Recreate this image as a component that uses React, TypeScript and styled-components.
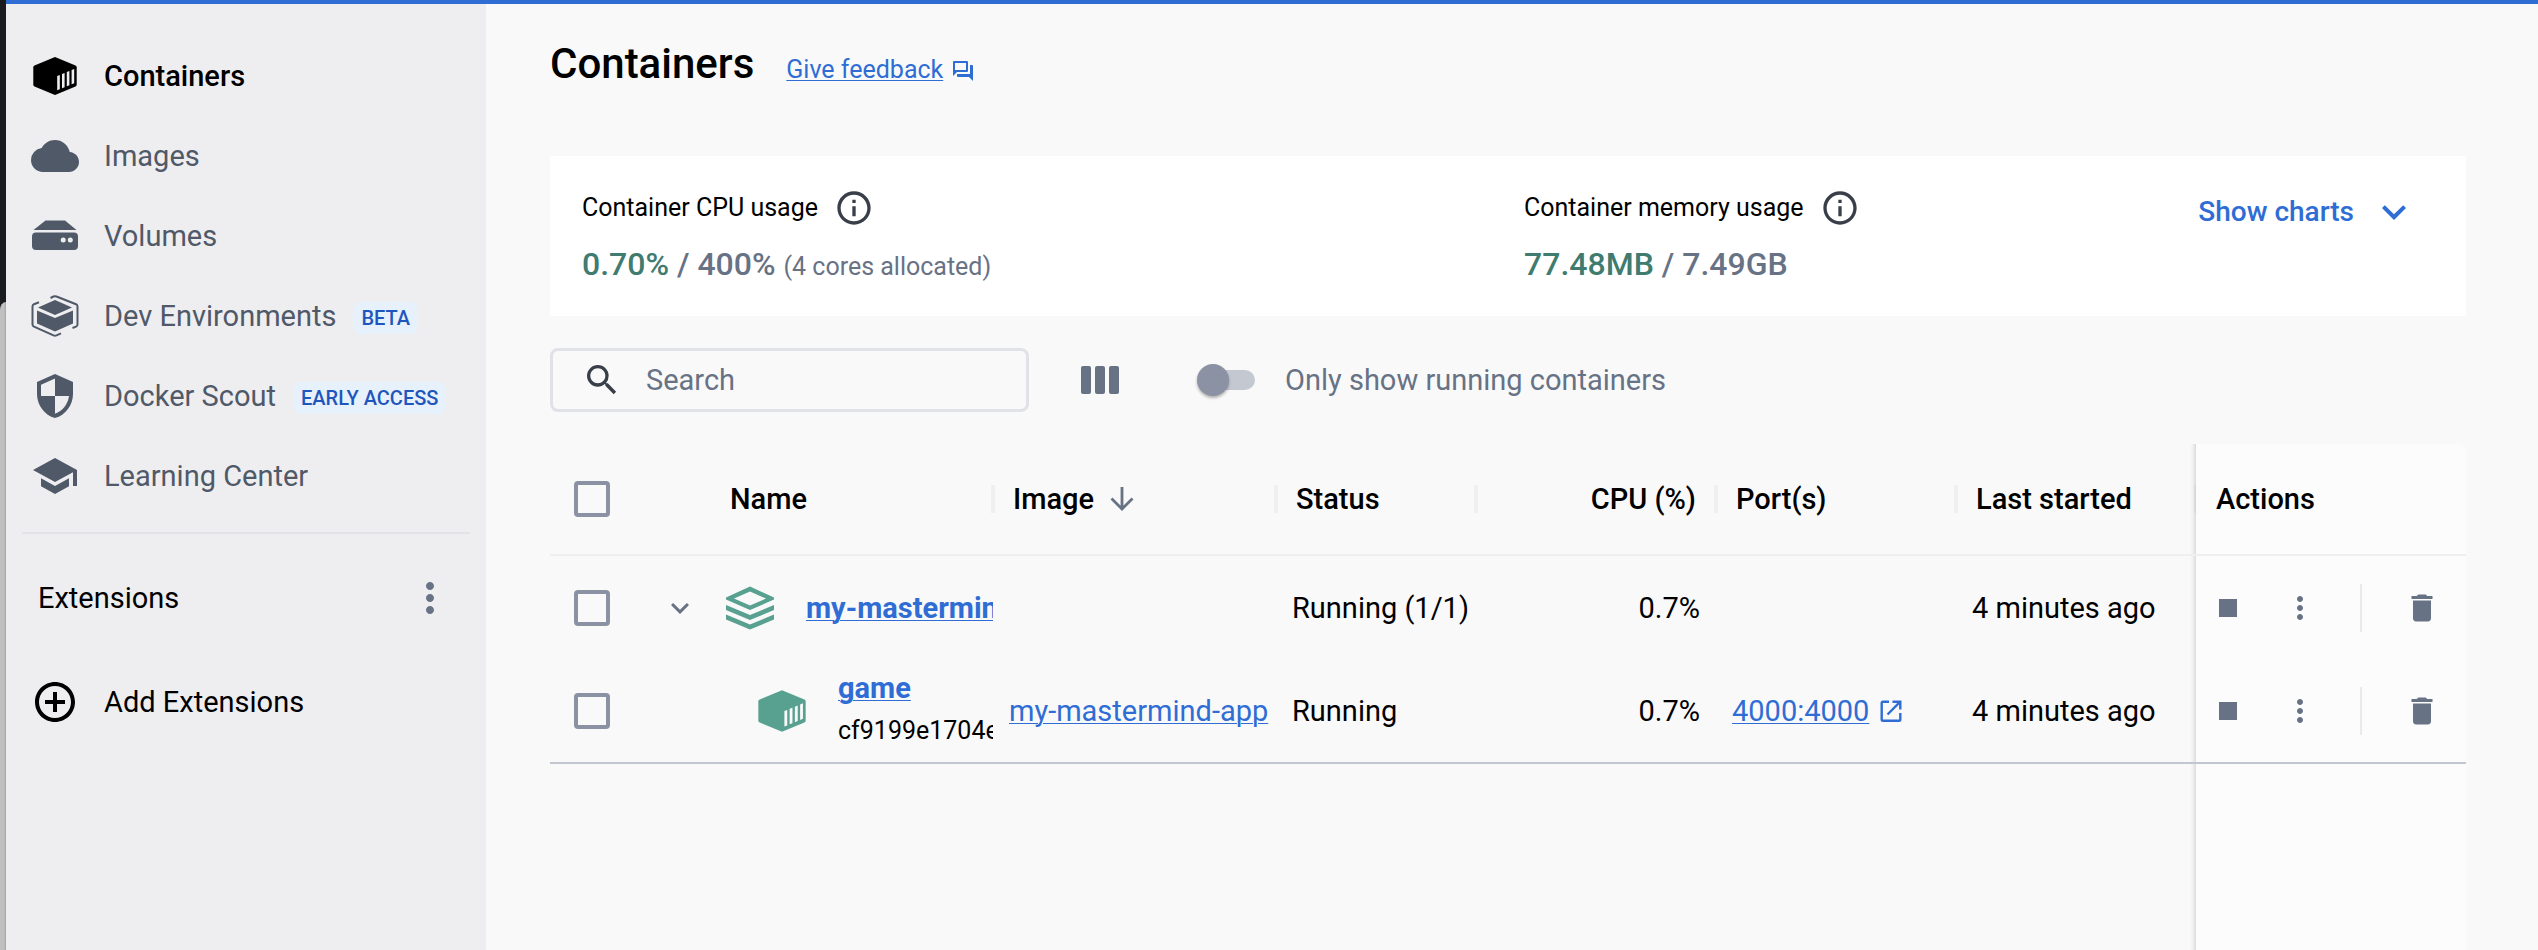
import React from "react";
import styled, { createGlobalStyle } from "styled-components";
import {
  MdAddCircleOutline,
  MdCloud,
  MdDelete,
  MdExpandMore,
  MdInfoOutline,
  MdMoreVert,
  MdSchool,
  MdSearch,
  MdStop,
} from "react-icons/md";

const c = {
  page: "#f9f9fa",
  sidebar: "#eeeef1",
  sticky: "#fcfcfd",
  blue: "#2f6dd5",
  badgeText: "#1f56bd",
  badgeBg: "#e6f1fb",
  text: "#000000",
  nav: "#505968",
  muted: "#677285",
  control: "#8b92a4",
  track: "#c4c8d1",
  dark: "#393f49",
  line: "#eeeff1",
  border: "#e1e2e7",
  rule: "#c1c6cf",
  green: "#3f7b6e",
  iconGreen: "#58a08f",
};

const GlobalStyle = createGlobalStyle`
  *, *::before, *::after { box-sizing: border-box; }
  body {
    margin: 0;
    background: ${c.page};
    color: ${c.text};
    font-family: Roboto, "Liberation Sans", sans-serif;
    font-size: 29px;
    line-height: 40px;
  }
  button {
    font: inherit;
    color: inherit;
    background: none;
    border: 0;
    padding: 0;
    cursor: pointer;
  }
`;

const Shell = styled.div`
  display: flex;
  min-height: 100vh;
`;

const Backdrop = styled.div`
  flex: none;
  width: 6px;
  display: flex;
  flex-direction: column;
  background: #1a1b1e;
`;

const BackdropWindow = styled.div`
  flex: 1;
  margin-top: 302px;
  background: linear-gradient(90deg, #c0c0c0 4px, #a2a2a4 6px);
  border-top-left-radius: 6px 8px;
`;

const AppWindow = styled.div`
  flex: 1;
  min-width: 0;
  display: flex;
  border-top: 4px solid ${c.blue};
`;

const Sidebar = styled.aside`
  flex: none;
  width: 480px;
  padding: 32px 16px;
  background: ${c.sidebar};
`;

const NavList = styled.ul`
  list-style: none;
  margin: 0;
  padding: 0 0 16px;
  border-bottom: 2px solid #e2e3e6;
`;

const NavLink = styled.a<{ $active?: boolean }>`
  display: flex;
  align-items: center;
  height: 80px;
  padding-left: 9px;
  color: ${(p) => (p.$active ? c.text : c.nav)};
  font-weight: ${(p) => (p.$active ? 500 : 400)};
  text-decoration: none;
  white-space: nowrap;

  svg {
    flex: none;
    width: 48px;
    height: 48px;
    margin-right: 25px;
  }
`;

const Badge = styled.span`
  margin: 4px 0 0 17px;
  padding: 0 8px;
  border-radius: 8px;
  background: ${c.badgeBg};
  color: ${c.badgeText};
  font-size: 20px;
  font-weight: 500;
  line-height: 32px;
`;

const ExtensionsHeader = styled.div`
  display: flex;
  align-items: center;
  justify-content: space-between;
  margin-top: 40px;
  padding: 0 16px;
  height: 48px;
`;

const ExtensionsTitle = styled.h2`
  margin: 0;
  font-size: 29px;
  font-weight: 400;
`;

const IconButton = styled.button<{ $size: number }>`
  display: flex;
  width: ${(p) => p.$size}px;
  height: ${(p) => p.$size}px;
  color: ${c.muted};

  svg {
    width: 100%;
    height: 100%;
  }
`;

const AddButton = styled.button`
  display: flex;
  align-items: center;
  width: 100%;
  height: 80px;
  margin-top: 40px;
  padding-left: 9px;

  svg {
    width: 48px;
    height: 48px;
    margin-right: 25px;
  }
`;

const Main = styled.main`
  flex: 1;
  min-width: 0;
  display: flex;
  flex-direction: column;
  padding: 32px 72px 0 64px;
`;

const PageHeader = styled.header`
  display: flex;
  align-items: baseline;
  gap: 32px;
`;

const PageTitle = styled.h1`
  margin: 0;
  font-size: 42px;
  font-weight: 500;
  line-height: 56px;
`;

const TextLink = styled.a<{ $strong?: boolean; $small?: boolean }>`
  color: ${c.blue};
  font-size: ${(p) => (p.$small ? 25 : 29)}px;
  font-weight: ${(p) => (p.$strong ? 700 : 400)};
  text-decoration: underline;
  text-decoration-thickness: 1px;
  text-underline-offset: 2px;
`;

const LinkWithIcon = styled.span`
  display: inline-flex;
  align-items: center;
  gap: 8px;
  color: ${c.blue};
`;

const Summary = styled.section`
  display: grid;
  grid-template-columns: 1fr 1fr;
  margin-top: 64px;
  padding: 32px 0 32px 32px;
  background: #ffffff;
`;

const SummaryCell = styled.div`
  display: flex;
  align-items: flex-start;
  justify-content: space-between;
  padding-right: 48px;
`;

const Label = styled.div`
  display: flex;
  align-items: center;
  gap: 16px;
  height: 40px;
  font-size: 25px;

  svg {
    width: 40px;
    height: 40px;
    color: ${c.dark};
  }
`;

const Value = styled.p`
  margin: 16px 0 0;
  color: ${c.muted};
  font-size: 32px;
  font-weight: 500;
  line-height: 40px;

  strong {
    color: ${c.green};
    font-weight: 500;
  }

  small {
    font-size: 25px;
    font-weight: 400;
    line-height: 1;
  }
`;

const ChartsButton = styled.button`
  display: flex;
  align-items: center;
  gap: 16px;
  height: 48px;
  color: ${c.blue};
  font-size: 28px;
  font-weight: 500;

  svg {
    width: 48px;
    height: 48px;
  }
`;

const Toolbar = styled.div`
  display: flex;
  align-items: center;
  margin-top: 32px;
  height: 64px;
`;

const SearchBox = styled.label`
  display: flex;
  align-items: center;
  gap: 24px;
  width: 479px;
  height: 64px;
  padding: 0 29px;
  border: 3px solid ${c.border};
  border-radius: 8px;

  svg {
    flex: none;
    width: 40px;
    height: 40px;
    color: ${c.dark};
  }
`;

const SearchInput = styled.input`
  flex: 1;
  min-width: 0;
  padding: 0;
  border: 0;
  outline: 0;
  background: transparent;
  font: inherit;

  &::placeholder {
    color: ${c.muted};
    opacity: 1;
  }
`;

const ColumnsButton = styled(IconButton)`
  margin: 0 77px 0 51px;
`;

const SwitchLabel = styled.label`
  display: flex;
  align-items: center;
  gap: 30px;
  color: ${c.muted};
`;

const Switch = styled.input`
  appearance: none;
  display: flex;
  align-items: center;
  width: 58px;
  height: 32px;
  margin: 0;

  &::before {
    content: "";
    z-index: 1;
    width: 32px;
    height: 32px;
    border-radius: 50%;
    background: ${c.control};
    box-shadow: 0 2px 3px rgba(0, 0, 0, 0.3);
  }

  &::after {
    content: "";
    width: 42px;
    height: 20px;
    margin-left: -16px;
    border-radius: 10px;
    background: ${c.track};
  }

  &:checked::before {
    order: 1;
    margin-left: -16px;
  }

  &:checked::after {
    margin-left: 0;
  }
`;

const TableArea = styled.div`
  flex: 1;
  display: flex;
  flex-direction: column;
  margin-top: 32px;
`;

const Table = styled.table`
  width: 100%;
  table-layout: fixed;
  border-collapse: separate;
  border-spacing: 0;
`;

const Column = styled.col<{ $width: number }>`
  width: ${(p) => p.$width}px;
`;

const HeadCell = styled.th`
  height: 112px;
  padding: 0;
  border-bottom: 2px solid ${c.line};
  font-weight: 500;
  text-align: left;
  white-space: nowrap;
`;

const HeadCheckCell = styled(HeadCell)`
  padding: 0 24px;
`;

const HeadLabel = styled.div<{ $right?: boolean; $divided?: boolean }>`
  display: flex;
  align-items: center;
  justify-content: ${(p) => (p.$right ? "flex-end" : "flex-start")};
  gap: 16px;
  height: 28px;
  margin-right: -2px;
  padding: 0 18px 0 20px;
  border-right: ${(p) => (p.$divided ? 4 : 0)}px solid ${c.line};
`;

const Cell = styled.td<{ $right?: boolean; $last?: boolean }>`
  height: 104px;
  padding: 0 16px;
  border-bottom: ${(p) => (p.$last ? 2 : 0)}px solid ${c.rule};
  text-align: ${(p) => (p.$right ? "right" : "left")};
  white-space: nowrap;
`;

const CheckCell = styled(Cell)`
  padding: 0 24px;
`;

const ExpandCell = styled(Cell)`
  padding: 0 28px;
`;

const NameCell = styled(Cell)<{ $nested?: boolean }>`
  padding: 0 0 0 ${(p) => (p.$nested ? 48 : 16)}px;
  overflow: hidden;
`;

const NameContent = styled.div`
  display: flex;
  align-items: center;
  gap: 32px;

  svg {
    flex: none;
    width: 48px;
    height: 48px;
    color: ${c.iconGreen};
  }
`;

const ContainerName = styled.div`
  line-height: 34px;
`;

const ContainerId = styled.div`
  margin-top: 6px;
  font-size: 25px;
`;

const stickyColumn = `
  position: relative;
  background: ${c.sticky};

  &::before {
    content: "";
    position: absolute;
    top: 0;
    bottom: 0;
    right: 100%;
    width: 6px;
    background: linear-gradient(to left, rgba(0, 0, 0, 0.12), rgba(0, 0, 0, 0.04) 50%, transparent);
  }
`;

const ActionsHead = styled(HeadCell)`
  ${stickyColumn}
  border-top-right-radius: 8px;
`;

const ActionsCell = styled(Cell)`
  ${stickyColumn}
  padding: 0 0 0 14px;
`;

const ActionsFiller = styled.div`
  ${stickyColumn}
  flex: 1;
  align-self: flex-end;
  width: 270px;
`;

const ActionList = styled.div`
  display: flex;
  align-items: center;
  gap: 36px;
`;

const ActionDivider = styled.span`
  width: 2px;
  height: 48px;
  margin: 0 6px;
  background: #e9eaed;
`;

const Checkbox = styled.input`
  appearance: none;
  display: block;
  width: 36px;
  height: 36px;
  margin: 0;
  border: 4px solid ${c.control};
  border-radius: 4px;

  &:checked {
    background: ${c.blue};
  }
`;

function ContainerIcon({ stripe, viewBox = "0 0 48 48" }: { stripe: string; viewBox?: string }) {
  return (
    <svg viewBox={viewBox} aria-hidden="true">
      <path
        d="M24 5 44.5 13.5Q45.7 14 45.7 15.3V32.7Q45.7 34 44.5 34.5L24 43 3.5 34.5Q2.3 34 2.3 32.7V15.3Q2.3 14 3.5 13.5Z"
        fill="currentColor"
      />
      <path
        d="M26.2 24 28.8 23V37.2L26.2 38.2ZM31 22 33.6 21V35.2L31 36.2ZM35.8 20 38.4 19V33.2L35.8 34.2ZM40.6 18 43.2 17V31.2L40.6 32.2Z"
        fill={stripe}
      />
    </svg>
  );
}

function VolumesIcon() {
  return (
    <svg viewBox="0 0 48 48" aria-hidden="true">
      <path d="M14.5 8.5H34L45.5 18H2.5Z" fill="currentColor" />
      <path
        fillRule="evenodd"
        d="M5 20.5H43Q47 20.5 47 24.5V34Q47 38 43 38H5Q1 38 1 34V24.5Q1 20.5 5 20.5ZM32.2 25.5A2.5 2.5 0 1 0 32.2 30.5A2.5 2.5 0 1 0 32.2 25.5ZM39.3 25.5A2.5 2.5 0 1 0 39.3 30.5A2.5 2.5 0 1 0 39.3 25.5Z"
        fill="currentColor"
      />
    </svg>
  );
}

function DevEnvironmentsIcon() {
  return (
    <svg viewBox="0 0 48 48" aria-hidden="true">
      <path d="M24 8 41 15.5 24 23 7 15.5Z" fill="currentColor" />
      <path d="M6 18.5 24 26 42 18.5V31.5L24 39.5 6 31.5Z" fill="currentColor" />
      <path
        d="M19.5 6 22.5 4.5Q24 3.8 25.5 4.5L45 12.2Q46.5 13 46.5 14.5V32.5Q46.5 34 45 34.7L41.5 36M30 41.3 25.5 43.3Q24 44 22.5 43.3L3 34.7Q1.5 34 1.5 32.5V14.5Q1.5 13 3 12.2L8 10.2"
        fill="none"
        stroke="currentColor"
        strokeWidth="2"
      />
    </svg>
  );
}

function ScoutIcon() {
  return (
    <svg viewBox="0 0 48 48" aria-hidden="true">
      <path
        fillRule="evenodd"
        d="M24 2 42 10V22C42 33 34.5 43.3 24 46 13.5 43.3 6 33 6 22V10ZM24 6.5V24H38C37 32 31.5 39.3 24 41.7V24H10V12.7Z"
        fill="currentColor"
      />
    </svg>
  );
}

function FeedbackIcon() {
  return (
    <svg width="24" height="24" viewBox="0 0 24 24" aria-hidden="true">
      <path
        fillRule="evenodd"
        d="M3 3H16Q17 3 17 4V13Q17 14 16 14H6L2 18V4Q2 3 3 3ZM4 5V12H15V5ZM19 7H21Q22 7 22 8V23L18 19H7Q6 19 6 18V16H19Z"
        fill="currentColor"
      />
    </svg>
  );
}

function ColumnsIcon() {
  return (
    <svg viewBox="0 0 40 40" aria-hidden="true">
      <g fill="currentColor">
        <rect x="1" y="6" width="10" height="28" rx="2" />
        <rect x="15" y="6" width="10" height="28" rx="2" />
        <rect x="29" y="6" width="10" height="28" rx="2" />
      </g>
    </svg>
  );
}

function SortIcon() {
  return (
    <svg width="24" height="24" viewBox="0 0 24 24" aria-hidden="true">
      <path
        d="M12 0V22M1.5 11.5 12 22 22.5 11.5"
        fill="none"
        stroke={c.muted}
        strokeWidth="2.8"
      />
    </svg>
  );
}

function StackIcon() {
  return (
    <svg viewBox="0 0 48 48" aria-hidden="true">
      <path
        fillRule="evenodd"
        d="M24 2.5 48 13.5V15.5L24 26 0 15.5V13.5ZM24 7.5 8 14.5 24 21.5 40 14.5Z"
        fill="currentColor"
      />
      <path
        d="M0 21 24 31 48 21V26L24 36 0 26ZM0 30.5 24 40.5 48 30.5V35.5L24 45.5 0 35.5Z"
        fill="currentColor"
      />
    </svg>
  );
}

function OpenIcon() {
  return (
    <svg width="28" height="28" viewBox="0 0 28 28" aria-hidden="true">
      <path
        d="M12 4.7H6Q4.7 4.7 4.7 6V22.5Q4.7 23.8 6 23.8H22Q23.3 23.8 23.3 22.5V16M15.5 4.7H23.3V12.5M23.3 4.7 10.5 17.5"
        fill="none"
        stroke="currentColor"
        strokeWidth="2.4"
      />
    </svg>
  );
}

function RowActions({ name }: { name: string }) {
  return (
    <ActionList>
      <IconButton $size={36} aria-label={`Stop ${name}`}>
        <MdStop />
      </IconButton>
      <IconButton $size={36} aria-label={`More actions for ${name}`}>
        <MdMoreVert />
      </IconButton>
      <ActionDivider />
      <IconButton $size={36} aria-label={`Delete ${name}`}>
        <MdDelete />
      </IconButton>
    </ActionList>
  );
}

const navItems: {
  label: string;
  icon: React.ReactNode;
  badge?: string;
  active?: boolean;
}[] = [
  { label: "Containers", icon: <ContainerIcon stripe={c.sidebar} />, active: true },
  { label: "Images", icon: <MdCloud /> },
  { label: "Volumes", icon: <VolumesIcon /> },
  { label: "Dev Environments", icon: <DevEnvironmentsIcon />, badge: "BETA" },
  { label: "Docker Scout", icon: <ScoutIcon />, badge: "EARLY ACCESS" },
  { label: "Learning Center", icon: <MdSchool /> },
];

export default function App() {
  return (
    <>
      <GlobalStyle />
      <Shell>
        <Backdrop>
          <BackdropWindow />
        </Backdrop>
        <AppWindow>
          <Sidebar>
            <nav>
              <NavList>
                {navItems.map((item) => (
                  <li key={item.label}>
                    <NavLink href="#" $active={item.active}>
                      {item.icon}
                      {item.label}
                      {item.badge && <Badge>{item.badge}</Badge>}
                    </NavLink>
                  </li>
                ))}
              </NavList>
            </nav>
            <ExtensionsHeader>
              <ExtensionsTitle>Extensions</ExtensionsTitle>
              <IconButton $size={48} aria-label="Extensions menu">
                <MdMoreVert />
              </IconButton>
            </ExtensionsHeader>
            <AddButton>
              <MdAddCircleOutline />
              Add Extensions
            </AddButton>
          </Sidebar>

          <Main>
            <PageHeader>
              <PageTitle>Containers</PageTitle>
              <LinkWithIcon>
                <TextLink href="#" $small>
                  Give feedback
                </TextLink>
                <FeedbackIcon />
              </LinkWithIcon>
            </PageHeader>

            <Summary>
              <SummaryCell>
                <div>
                  <Label>
                    Container CPU usage <MdInfoOutline />
                  </Label>
                  <Value>
                    <strong>0.70%</strong> / 400% <small>(4 cores allocated)</small>
                  </Value>
                </div>
              </SummaryCell>
              <SummaryCell>
                <div>
                  <Label>
                    Container memory usage <MdInfoOutline />
                  </Label>
                  <Value>
                    <strong>77.48MB</strong> / 7.49GB
                  </Value>
                </div>
                <ChartsButton>
                  Show charts <MdExpandMore />
                </ChartsButton>
              </SummaryCell>
            </Summary>

            <Toolbar>
              <SearchBox>
                <MdSearch />
                <SearchInput type="text" placeholder="Search" aria-label="Search" />
              </SearchBox>
              <ColumnsButton $size={40} aria-label="Choose columns">
                <ColumnsIcon />
              </ColumnsButton>
              <SwitchLabel>
                <Switch type="checkbox" role="switch" />
                Only show running containers
              </SwitchLabel>
            </Toolbar>

            <TableArea>
              <Table>
                <colgroup>
                  <Column $width={84} />
                  <Column $width={76} />
                  <Column $width={283} />
                  <col />
                  <Column $width={200} />
                  <Column $width={240} />
                  <Column $width={240} />
                  <Column $width={240} />
                  <Column $width={270} />
                </colgroup>
                <thead>
                  <tr>
                    <HeadCheckCell>
                      <Checkbox type="checkbox" aria-label="Select all containers" />
                    </HeadCheckCell>
                    <HeadCell />
                    <HeadCell>
                      <HeadLabel $divided>Name</HeadLabel>
                    </HeadCell>
                    <HeadCell aria-sort="descending">
                      <HeadLabel $divided>
                        Image <SortIcon />
                      </HeadLabel>
                    </HeadCell>
                    <HeadCell>
                      <HeadLabel $divided>Status</HeadLabel>
                    </HeadCell>
                    <HeadCell>
                      <HeadLabel $right $divided>
                        CPU (%)
                      </HeadLabel>
                    </HeadCell>
                    <HeadCell>
                      <HeadLabel $divided>Port(s)</HeadLabel>
                    </HeadCell>
                    <HeadCell>
                      <HeadLabel $divided>Last started</HeadLabel>
                    </HeadCell>
                    <ActionsHead>
                      <HeadLabel>Actions</HeadLabel>
                    </ActionsHead>
                  </tr>
                </thead>
                <tbody>
                  <tr>
                    <CheckCell>
                      <Checkbox type="checkbox" aria-label="Select my-mastermind" />
                    </CheckCell>
                    <ExpandCell>
                      <IconButton $size={36} aria-label="Collapse my-mastermind">
                        <MdExpandMore />
                      </IconButton>
                    </ExpandCell>
                    <NameCell>
                      <NameContent>
                        <StackIcon />
                        <TextLink href="#" $strong>
                          my-mastermind
                        </TextLink>
                      </NameContent>
                    </NameCell>
                    <Cell />
                    <Cell>Running (1/1)</Cell>
                    <Cell $right>0.7%</Cell>
                    <Cell />
                    <Cell>4 minutes ago</Cell>
                    <ActionsCell>
                      <RowActions name="my-mastermind" />
                    </ActionsCell>
                  </tr>
                  <tr>
                    <CheckCell $last>
                      <Checkbox type="checkbox" aria-label="Select game" />
                    </CheckCell>
                    <ExpandCell $last />
                    <NameCell $last $nested>
                      <NameContent>
                        <ContainerIcon stripe={c.page} viewBox="2 2 44 44" />
                        <div>
                          <ContainerName>
                            <TextLink href="#" $strong>
                              game
                            </TextLink>
                          </ContainerName>
                          <ContainerId>cf9199e1704e</ContainerId>
                        </div>
                      </NameContent>
                    </NameCell>
                    <Cell $last>
                      <TextLink href="#">my-mastermind-app</TextLink>
                    </Cell>
                    <Cell $last>Running</Cell>
                    <Cell $last $right>
                      0.7%
                    </Cell>
                    <Cell $last>
                      <LinkWithIcon>
                        <TextLink href="#">4000:4000</TextLink>
                        <OpenIcon />
                      </LinkWithIcon>
                    </Cell>
                    <Cell $last>4 minutes ago</Cell>
                    <ActionsCell $last>
                      <RowActions name="game" />
                    </ActionsCell>
                  </tr>
                </tbody>
              </Table>
              <ActionsFiller />
            </TableArea>
          </Main>
        </AppWindow>
      </Shell>
    </>
  );
}
